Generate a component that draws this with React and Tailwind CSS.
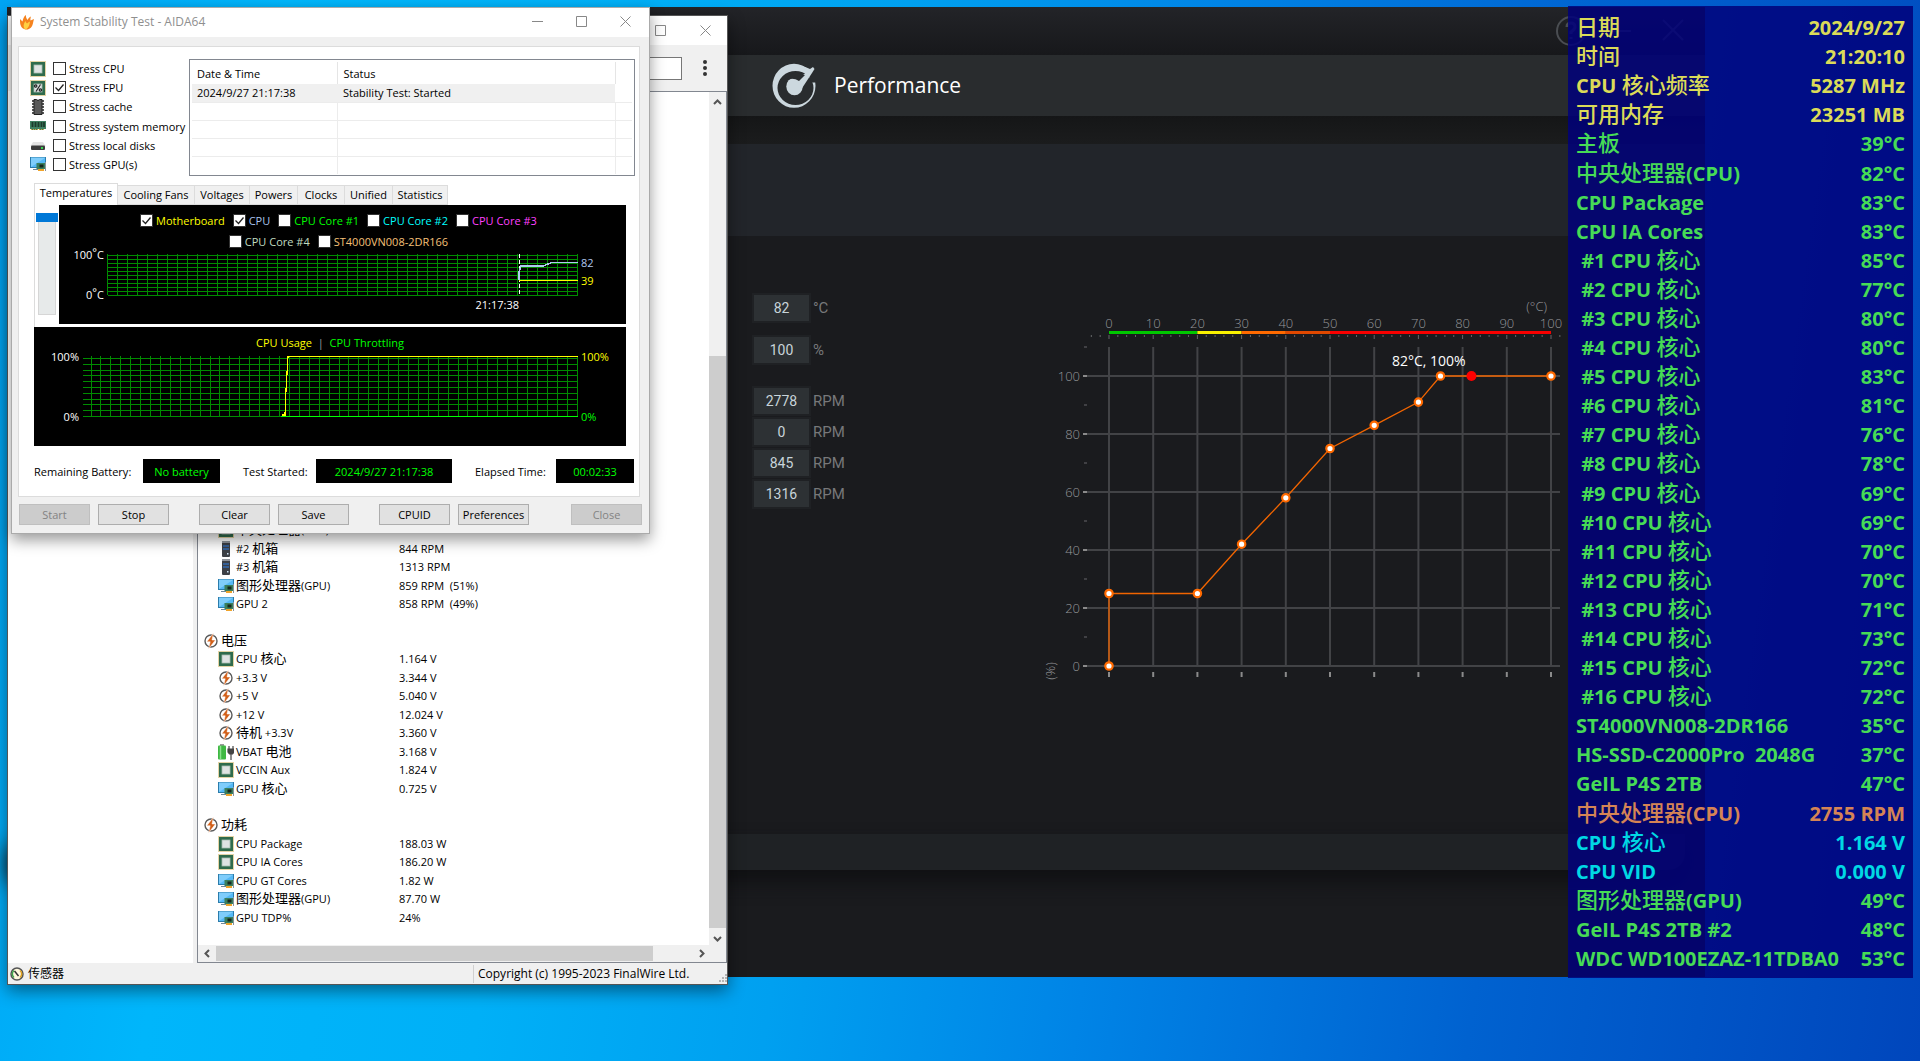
import React from "react";

const UI = "font-['Open_Sans','Noto_Sans_CJK_SC',sans-serif]";

/* ---------- icons ---------- */

function CpuIcon({ percent }) {
  return (
    <svg width="16" height="16" viewBox="0 0 16 16" className="shrink-0">
      <rect x="0.5" y="0.5" width="15" height="15" fill="none" stroke="#c9a64a" strokeDasharray="1 1" />
      <rect x="1" y="1" width="14" height="14" fill="#2f6b4c" />
      <rect x="4" y="4" width="8" height="8" fill="#dfe3e3" stroke="#a9bdb2" strokeWidth="0.8" />
      {percent && (
        <g stroke="#222" strokeWidth="1.2" fill="none">
          <path d="M10.5 4.5 6 11.5" />
          <circle cx="5.7" cy="6" r="1.2" />
          <circle cx="10.4" cy="10" r="1.2" />
        </g>
      )}
    </svg>
  );
}

function ChipIcon() {
  return (
    <svg width="16" height="16" viewBox="0 0 16 16" className="shrink-0">
      <path d="M2 2h12M2 5h12M2 8h12M2 11h12M2 14h12" stroke="#222" strokeWidth="1.6" />
      <path d="M4 .5h2.5q1.5 2 3 0H12v15H4z" fill="#5a5a5a" stroke="#222" />
    </svg>
  );
}

function RamIcon() {
  return (
    <svg width="16" height="16" viewBox="0 0 16 16" className="shrink-0">
      <path d="M0 3h16v8h-2v1H9v-1H7v1H2v-1H0z" fill="#3f8060" />
      <path d="M2.5 4v5M5.5 4v5M8.5 4v5M11.5 4v5M14 4v5" stroke="#1c3b2c" strokeWidth="1.8" />
      <path d="M1 11.5h14" stroke="#d3a63d" strokeDasharray="1 1" />
    </svg>
  );
}

function DiskIcon() {
  return (
    <svg width="16" height="16" viewBox="0 0 16 16" className="shrink-0">
      <path d="M3 5h10l2.5 4H.5z" fill="#e4e4e4" />
      <rect x="1" y="8.5" width="14" height="4.5" rx="1" fill="#3c3c3c" />
      <rect x="11" y="10" width="2" height="2" fill="#39d353" />
    </svg>
  );
}

function GpuIcon() {
  return (
    <svg width="16" height="16" viewBox="0 0 16 16" className="shrink-0">
      <rect x="0.5" y="1.5" width="15" height="10" fill="#55b8f5" stroke="#2b7cab" />
      <path d="M1 11 15 2v-.5H1z" fill="#7fcdfb" />
      <path d="M3 13.5h5" stroke="#6f8797" />
      <rect x="6.5" y="7" width="9" height="6" fill="#3a7f5e" />
      <rect x="9.5" y="8.5" width="4" height="3" fill="#16291f" />
      <rect x="8" y="13" width="6" height="2" fill="#f0a32a" />
      <path d="M15.5 6v9" stroke="#8a949a" />
    </svg>
  );
}

function BoltIcon() {
  return (
    <svg width="16" height="16" viewBox="0 0 16 16" className="shrink-0">
      <circle cx="8" cy="8" r="6" fill="#fff" stroke="#5a5a5a" strokeWidth="1.4" />
      <path d="M10.500 0 3.800 8.800h3.400L5.500 16l6.900-9H9z" fill="#d2601a" stroke="#fff" strokeWidth=".5" />
    </svg>
  );
}

function TowerIcon() {
  return (
    <svg width="16" height="16" viewBox="0 0 16 16" className="shrink-0">
      <rect x="4" y="0" width="8" height="16" rx="1" fill="#3d4046" />
      <rect x="4" y="0" width="8" height="2" fill="#8f949b" />
      <path d="M5 5h6M5 8h6" stroke="#2f7fe6" strokeWidth="1.2" />
      <rect x="9" y="12" width="1.5" height="1.5" fill="#cfe3f5" />
    </svg>
  );
}

function BatteryIcon() {
  return (
    <svg width="16" height="16" viewBox="0 0 16 16" className="shrink-0">
      <rect x="2" y="0" width="4" height="2" fill="#9a9a9a" />
      <rect x="0" y="1.5" width="8" height="14" rx="1" fill="#3fb843" />
      <path d="M2.5 2v13" stroke="#8be28d" strokeWidth="1.5" />
      <path d="M11 2v3M15 2v3M10 5h6v3l-1.5 2h-3L10 8zM13 10v6" fill="#444" stroke="#444" strokeWidth="1.2" />
    </svg>
  );
}

function FlameIcon() {
  return (
    <svg width="14" height="16" viewBox="0 0 14 16" className="shrink-0">
      <path d="M4 15C0 13 0 9 0 5l2.500 2.500C3 5 4 2 6 1c-.3 2 .5 3.500 1.500 5C8.500 4 9.500 3 11 2.500 10.500 4 10.300 5 10.500 6.500L14 5c-.5 2-.8 3-1.200 5-.5 3-3 5-5 5.500-1.300 0-2.600 0-3.800-.5z" fill="#f5831f" />
      <path d="M4.500 15C3 12.500 3.500 9.500 5.500 7c.5 1.500 1 2 1.500 2.500 1-1 2-1.500 3-2-.5 3-1 6-4 8z" fill="#ffd042" />
    </svg>
  );
}

function GaugeIcon() {
  return (
    <svg width="14" height="14" viewBox="0 0 14 14" className="shrink-0">
      <circle cx="7" cy="7" r="6" fill="#fff9df" stroke="#555" strokeWidth="1.5" />
      <path d="M4 3.5a4.5 4.5 0 0 0 0 7" stroke="#3da648" strokeWidth="1.5" fill="none" />
      <path d="M10 3.5a4.5 4.5 0 0 1 0 7" stroke="#e0a020" strokeWidth="1.5" fill="none" />
      <path d="m4.5 4 4 5" stroke="#333" strokeWidth="1.5" />
    </svg>
  );
}

function MinIcon() {
  return (
    <svg width="11" height="11" viewBox="0 0 11 11" stroke="#888" fill="none"><path d="M0 5.5h11" /></svg>
  );
}
function MaxIcon() {
  return (
    <svg width="11" height="11" viewBox="0 0 11 11" stroke="#888" fill="none"><path d="M.5.5h10v10H.5z" /></svg>
  );
}
function CloseIcon() {
  return (
    <svg width="11" height="11" viewBox="0 0 11 11" stroke="#888" fill="none"><path d="m.5.5 10 10M10.5.5l-10 10" /></svg>
  );
}

function Chevron({ d }) {
  return (
    <svg width="9" height="9" viewBox="0 0 9 9" fill="none" stroke="#555" strokeWidth="2"><path d={d} /></svg>
  );
}

function SpeedIcon() {
  return (
    <svg width="44" height="46" viewBox="0 0 44 46" className="shrink-0" fill="#ccd8de">
      <path
        fillRule="evenodd"
        d="M22 .8a21.500 22 0 1 0 0 44a21.500 22 0 1 0 0-44zM23.500 8a18 17 0 1 1 0 34a18 17 0 1 1 0-34z"
      />
      <path d="M33 0h11v19.500h-5z" fill="#292c2e" />
      <ellipse cx="22.500" cy="23.500" rx="8.200" ry="8.700" />
      <path d="M41 4l1.500 2L40 10 29.500 26l-8-8L33 10.500 30 3l4.500 1.500L38 6z" />
      <path d="M24 9.500 33 12 27 18q-6-4-12-1 2-6 9-7.500z" fill="#292c2e" />
    </svg>
  );
}

/* ---------- fan control window ---------- */

const fx = (t) => 1109 + t * 4.42;
const fy = (p) => 666 - p * 2.9;
const curve = [[0, 0], [0, 25], [20, 25], [30, 42], [40, 58], [50, 75], [60, 83], [70, 91], [75, 100], [100, 100]];
const tens = [0, 10, 20, 30, 40, 50, 60, 70, 80, 90, 100];
const bands = [
  [0, 20, "#00c800"], [20, 30, "#f8f000"], [30, 40, "#ff6a00"], [40, 50, "#e04800"], [50, 100, "#f80000"],
];

function FanCurve() {
  const minor = [];
  for (let t = -4; t <= 102; t += 2) minor.push(t);
  return (
    <svg width="528" height="392" viewBox="1040 295 528 392" className="shrink-0 font-['Open_Sans',sans-serif] text-[13px] font-light">
      <g stroke="#424346" strokeWidth="2">
        {tens.map((t) => <path key={t} d={`M${fx(t)} 347V666`} />)}
        {[0, 20, 40, 60, 80, 100].map((p) => <path key={p} d={`M1087 ${fy(p)}H1560`} />)}
      </g>
      <g stroke="#8b8b8b" strokeWidth="2">
        {tens.map((t) => <path key={t} d={`M${fx(t)} 672v5`} />)}
        {[0, 20, 40, 60, 80, 100].map((p) => <path key={p} d={`M1083 ${fy(p)}h4`} />)}
      </g>
      <g stroke="#66676a" strokeWidth="1">
        {[10, 30, 50, 70, 90, 110].map((p) => <path key={p} d={`M1084 ${fy(p)}h3`} />)}
        {minor.map((t) => <path key={t} d={`M${fx(t)} 335v${t % 10 === 0 ? 4 : 2}`} />)}
      </g>
      {bands.map(([a, b, c]) => <rect key={a} x={fx(a)} y="331" width={fx(b) - fx(a)} height="3" fill={c} />)}
      <g fill="#96979a">
        {tens.map((t) => <text key={t} x={fx(t)} y="328" textAnchor="middle">{t}</text>)}
        {[0, 20, 40, 60, 80, 100].map((p) => <text key={p} x="1080" y={fy(p) + 5} textAnchor="end">{p}</text>)}
        <text x="1547" y="311" textAnchor="end">(°C)</text>
        <text x="1050" y="671" textAnchor="middle" transform="rotate(-90 1050 671)" dy="5">(%)</text>
      </g>
      <polyline points={curve.map(([t, p]) => `${fx(t)},${fy(p)}`).join(" ")} fill="none" stroke="#f26500" strokeWidth="1.3" />
      {curve.map(([t, p]) => (
        <circle key={`${t}-${p}`} cx={fx(t)} cy={fy(p)} r="3.7" fill="#fff" stroke="#ff6a00" strokeWidth="2.2" />
      ))}
      <circle cx={fx(82)} cy={fy(100)} r="5" fill="#f00" />
      <text x="1392" y="366" fill="#fff" className="text-[14px] font-normal">82°C, 100%</text>
    </svg>
  );
}

function Reading({ value, unit }) {
  return (
    <div className="flex items-center gap-1">
      <output className="flex h-[26px] w-[55px] items-center justify-center bg-[#2d3134] text-[14px] text-[#c8d4da] shadow-[0_0_0_2px_#1f2124]">{value}</output>
      <span className="text-[15px] text-[#77787a]">{unit}</span>
    </div>
  );
}

function FanWindow() {
  return (
    <section className="absolute top-[7px] right-[215px] bottom-[84px] left-[7px] flex flex-col bg-[#1a1b1e] font-[Roboto,sans-serif]">
      <div className="flex h-12 items-center justify-end bg-gradient-to-b from-[#232428] to-[#17181b] pr-5">
        <svg width="130" height="32" viewBox="0 0 130 32" fill="none" stroke="#4a4d52" strokeWidth="2">
          <circle cx="16" cy="16" r="14" />
          <path d="M12 12q0-4 4-4t4 4q0 2-4 5v2M16 22v2" strokeWidth="3" />
          <path d="M56 16h20M108 5l20 20M128 5l-20 20" />
        </svg>
      </div>
      <header className="flex h-[61px] items-center gap-[18px] bg-[#292c2e] pl-[765px]">
        <SpeedIcon />
        <h1 className="font-['Open_Sans',sans-serif] text-[21px] text-white">Performance</h1>
      </header>
      <div className="h-7 bg-gradient-to-b from-[#151617] to-[#1b1c1d]" />
      <div className="h-[92px] bg-[#22252a]" />
      <div className="flex flex-1 pt-[59px] pl-[747px]">
        <div className="flex w-[286px] flex-col">
          <Reading value="82" unit="°C" />
          <div className="mt-4"><Reading value="100" unit="%" /></div>
          <div className="mt-[25px] flex flex-col gap-[5px]">
            {["2778", "0", "845", "1316"].map((v) => <Reading key={v} value={v} unit="RPM" />)}
          </div>
        </div>
        <FanCurve />
      </div>
      <div className="mr-5 h-9 rounded-br-2xl bg-[#1f2225] shadow-[0_12px_20px_#101113]" />
      <div className="h-[107px]" />
    </section>
  );
}

/* ---------- sensor list window ---------- */

const sensors = [
  ["cpu", "中央处理器(CPU)", "2755 RPM"],
  ["tower", "#2 机箱", "844 RPM"],
  ["tower", "#3 机箱", "1313 RPM"],
  ["gpu", "图形处理器(GPU)", "859 RPM\u00a0 (51%)"],
  ["gpu", "GPU 2", "858 RPM\u00a0 (49%)"],
  null,
  ["head", "电压"],
  ["cpu", "CPU 核心", "1.164 V"],
  ["bolt", "+3.3 V", "3.344 V"],
  ["bolt", "+5 V", "5.040 V"],
  ["bolt", "+12 V", "12.024 V"],
  ["bolt", "待机 +3.3V", "3.360 V"],
  ["battery", "VBAT 电池", "3.168 V"],
  ["cpu", "VCCIN Aux", "1.824 V"],
  ["gpu", "GPU 核心", "0.725 V"],
  null,
  ["head", "功耗"],
  ["cpu", "CPU Package", "188.03 W"],
  ["cpu", "CPU IA Cores", "186.20 W"],
  ["gpu", "CPU GT Cores", "1.82 W"],
  ["gpu", "图形处理器(GPU)", "87.70 W"],
  ["gpu", "GPU TDP%", "24%"],
];
const sensorIcons = { cpu: CpuIcon, tower: TowerIcon, gpu: GpuIcon, bolt: BoltIcon, battery: BatteryIcon, head: BoltIcon };

function isCjk(s) {
  return /[\u4e00-\u9fff]/.test(s);
}

/* Han characters sit one size above the Latin text beside them. */
function Mixed({ text, han }) {
  return text.split(/([\u4e00-\u9fff]+)/).map((s, i) => (isCjk(s) ? <span key={i} className={han}>{s}</span> : s));
}

function SensorRow({ row }) {
  if (!row) return <div className="min-h-0 flex-1" />;
  const [kind, name, value] = row;
  const Icon = sensorIcons[kind];
  return (
    <div className={`flex min-h-0 flex-1 items-center gap-[2px] leading-[18px] ${kind === "head" ? "pl-[5px]" : "pl-5"}`}>
      <Icon />
      <span className="w-[161px] whitespace-pre"><Mixed text={name} han="text-[13px] leading-none" /></span>
      <span>{value}</span>
    </div>
  );
}

function SensorWindow() {
  return (
    <section className={`absolute top-[15px] left-[7px] flex h-[970px] w-[721px] flex-col border border-[#555] bg-[#f0f0f0] text-[11px] text-black shadow-[0_6px_16px_rgba(0,0,0,0.45)] ${UI}`}>
      <div className="flex h-[29px] items-center justify-end gap-[34px] bg-white pr-4">
        <button aria-label="Maximize"><MaxIcon /></button>
        <button aria-label="Close"><CloseIcon /></button>
      </div>
      <div className="flex h-[46px] items-center justify-end gap-[21px] pr-5">
        <input aria-label="Search" className="h-[23px] w-[160px] border border-[#777] bg-white" />
        <button aria-label="Menu" className="flex flex-col gap-[2px]">
          {[0, 1, 2].map((i) => <span key={i} className="size-1 rounded-full bg-[#333]" />)}
        </button>
      </div>
      <div className="flex min-h-0 flex-1 gap-1">
        <div className="w-[185px] bg-white" />
        <div className="flex flex-1 flex-col border border-[#828790] bg-white">
          <div className="flex min-h-0 flex-1">
            <div className="flex flex-1 flex-col justify-end pb-[18px]">
              <div className="flex h-[406px] flex-col">
                {sensors.map((r, i) => <SensorRow key={i} row={r} />)}
              </div>
            </div>
            <div className="flex w-[17px] flex-col items-center bg-[#f0f0f0]">
              <button aria-label="Scroll up" className="h-[17px] pt-1"><Chevron d="m1 6 3.5-3.5L8 6" /></button>
              <div className="mt-[247px] w-full flex-1 bg-[#cdcdcd]" />
              <button aria-label="Scroll down" className="h-[17px] pt-1"><Chevron d="m1 3 3.5 3.5L8 3" /></button>
            </div>
          </div>
          <div className="flex h-[17px] items-center justify-between bg-[#f0f0f0] pr-5 pl-[5px]">
            <button aria-label="Scroll left"><Chevron d="M6 1 2.5 4.5 6 8" /></button>
            <div className="mr-auto ml-1 h-[15px] w-[437px] bg-[#cdcdcd]" />
            <button aria-label="Scroll right"><Chevron d="m3 1 3.5 3.500L3 8" /></button>
          </div>
        </div>
      </div>
      <footer className="flex h-[21px] items-center">
        <div className="flex w-[465px] items-center gap-1 pl-[2px]">
          <GaugeIcon />
          <span className="text-[12px]">传感器</span>
        </div>
        <div className="flex flex-1 items-center justify-between border-l border-[#d0d0d0] pl-1 text-[12px]">
          Copyright (c) 1995-2023 FinalWire Ltd.
          <svg width="8" height="8" viewBox="0 0 8 8" fill="#b5b5b5" className="mt-2">
            <path d="M6 0h2v2H6zM6 3h2v2H6zM6 6h2v2H6zM3 3h2v2H3zM3 6h2v2H3zM0 6h2v2H0z" />
          </svg>
        </div>
      </footer>
    </section>
  );
}

/* ---------- stability test window ---------- */

function Tick({ label, checked, className = "" }) {
  return (
    <label className={`flex items-center gap-[3px] whitespace-nowrap ${className}`}>
      <span className="relative flex size-[13px] shrink-0">
        <input type="checkbox" defaultChecked={checked} className="peer size-[13px] appearance-none border border-[#333] bg-white" />
        <svg viewBox="0 0 13 13" className="pointer-events-none absolute inset-0 hidden peer-checked:block" fill="none" stroke="#222" strokeWidth="1.3">
          <path d="m2.5 6.5 3 3 5-6" />
        </svg>
      </span>
      {label}
    </label>
  );
}

const stress = [
  [<CpuIcon key="i" />, "Stress CPU"],
  [<CpuIcon key="i" percent />, "Stress FPU", true],
  [<ChipIcon key="i" />, "Stress cache"],
  [<RamIcon key="i" />, "Stress system memory"],
  [<DiskIcon key="i" />, "Stress local disks"],
  [<GpuIcon key="i" />, "Stress GPU(s)"],
];

function EventTable() {
  return (
    <div className="h-[117px] w-[446px] border border-[#828790] bg-white px-[2px] pt-[2px]">
      <table className="w-full table-fixed border-collapse text-left">
        <colgroup>
          <col className="w-[145px]" />
          <col className="w-[278px]" />
          <col />
        </colgroup>
        <thead>
          <tr className="h-[22px]">
            <th className="border-r border-[#e5e5e5] pl-[5px] font-normal">Date &amp; Time</th>
            <th className="border-r border-[#e5e5e5] pl-[6px] font-normal">Status</th>
            <th />
          </tr>
        </thead>
        <tbody>
          <tr className="h-[18px]">
            <td className="bg-[#f0f0f0] pl-[5px]">2024/9/27 21:17:38</td>
            <td className="bg-[#f0f0f0] pl-[6px]">Stability Test: Started</td>
            <td />
          </tr>
          {[0, 1, 2, 3].map((i) => (
            <tr key={i} className="h-[18px] border-t border-[#ececec]">
              <td className="border-r border-[#ececec]" />
              <td className="border-r border-[#ececec]" />
              <td />
            </tr>
          ))}
        </tbody>
      </table>
    </div>
  );
}

function range(a, b, step) {
  const out = [];
  for (let v = a; v <= b; v += step) out.push(v);
  return out;
}

function TempPlot() {
  return (
    <svg width="567" height="81" viewBox="59 243 567 81" className="-mt-[6px] shrink-0 text-[11px]" shapeRendering="crispEdges">
      <g stroke="#008c00">
        {range(255, 295, 4).map((y) => <path key={y} d={`M108 ${y + 0.5}H578`} />)}
        {range(107, 577, 10).map((x) => <path key={x} d={`M${x + 0.5} 254V295`} />)}
      </g>
      <path d="M519.5 254v41" stroke="#fff" strokeDasharray="4 2" />
      <path d="M519 280V272L521 266H543L552 262.500H578" fill="none" stroke="#b0c8f0" strokeWidth="1.5" />
      <path d="M519 280.5h59" stroke="#ff0" strokeWidth="1.5" />
      <g fill="#fff">
        <text x="104" y="259" textAnchor="end">100<tspan dy="-3">°</tspan><tspan dy="3">C</tspan></text>
        <text x="104" y="299" textAnchor="end">0<tspan dy="-3">°</tspan><tspan dy="3">C</tspan></text>
        <text x="519" y="309" textAnchor="end">21:17:38</text>
      </g>
      <text x="581" y="267" fill="#b0c8f0">82</text>
      <text x="581" y="285" fill="#ff0">39</text>
    </svg>
  );
}

function UsagePlot() {
  return (
    <svg width="592" height="96" viewBox="34 350 592 96" className="text-[11px]" shapeRendering="crispEdges">
      <g stroke="#008c00">
        {range(0, 10, 1).map((i) => <path key={i} d={`M83 ${Math.round(358 + i * 5.8) + 0.5}H578`} />)}
        {range(0, 49, 1).map((i) => <path key={i} d={`M${Math.round(90.5 + i * 9.92) + 0.5} 356V416`} />)}
      </g>
      <path d="M281 416.5H578" stroke="#0f0" strokeWidth="1.5" />
      <path d="M282 415h3L286 390 288 356.500H578" fill="none" stroke="#ff0" strokeWidth="1.2" />
      <g fill="#fff" textAnchor="end">
        <text x="79" y="361">100%</text>
        <text x="79" y="421">0%</text>
      </g>
      <text x="581" y="361" fill="#ff0">100%</text>
      <text x="581" y="421" fill="#0f0">0%</text>
    </svg>
  );
}

const tabs = [
  ["Temperatures", "w-[84px]"], ["Cooling Fans", "w-[77px]"], ["Voltages", "w-[55px]"], ["Powers", "w-[48px]"],
  ["Clocks", "w-[47px]"], ["Unified", "w-[48px]"], ["Statistics", "w-[55px]"],
];

function Push({ children, disabled, className = "" }) {
  return (
    <button
      disabled={disabled}
      className={`h-[21px] w-[71px] border ${disabled ? "border-[#bfbfbf] bg-[#cccccc] text-[#838383]" : "border-[#adadad] bg-[#e1e1e1] text-black"} ${className}`}
    >
      {children}
    </button>
  );
}

function StabilityWindow() {
  return (
    <section className={`absolute top-[7px] left-[11px] flex h-[527px] w-[639px] flex-col border border-[#aaa] bg-[#f0f0f0] text-[11px] leading-[15px] text-black shadow-[0_6px_14px_rgba(0,0,0,0.4)] ${UI}`}>
      <header className="flex h-[29px] shrink-0 items-center bg-white pr-[18px] pb-[2px] pl-2 text-[#8f8f8f]">
        <FlameIcon />
        <h2 className="ml-[6px] text-[12px]">System Stability Test - AIDA64</h2>
        <div className="ml-auto flex gap-[33px]">
          <button aria-label="Minimize"><MinIcon /></button>
          <button aria-label="Maximize"><MaxIcon /></button>
          <button aria-label="Close"><CloseIcon /></button>
        </div>
      </header>
      <div className="mx-[6px] mt-[9px] h-[451px] w-[622px] border border-[#dcdcdc] bg-white">
        <div className="flex pt-3 pl-[11px]">
          <div className="flex h-[115px] w-[159px] flex-col">
            {stress.map(([icon, label, on]) => (
              <div key={label} className="flex flex-1 items-center gap-[7px]">
                {icon}
                <Tick label={label} checked={on} />
              </div>
            ))}
          </div>
          <EventTable />
        </div>
        <div role="tablist" className="mt-[7px] ml-[15px] flex h-[22px] items-end">
          {tabs.map(([t, w], i) => (
            <button
              key={t}
              role="tab"
              aria-selected={i === 0}
              className={`${w} border-t border-r border-[#dcdcdc] whitespace-nowrap ${i === 0 ? "h-[22px] border-l bg-white pb-1" : "h-5 border-b bg-[#f0f0f0] pb-[2px]"}`}
            >
              {t}
            </button>
          ))}
        </div>
        <div className="ml-[15px] flex w-[592px] border-l border-[#dcdcdc]">
          <div className="relative flex h-[122px] w-6 justify-center pt-2">
            <div className="h-[102px] w-[18px] border border-[#d6d6d6] bg-[#e7eaea]" />
            <div className="absolute top-2 left-px h-[9px] w-[22px] bg-[#0078d7]" />
          </div>
          <div className="flex h-[119px] flex-1 flex-col bg-black pt-2">
            <div className="flex justify-center gap-2 pr-2">
              <Tick label="Motherboard" checked className="text-[#ffff00]" />
              <Tick label="CPU" checked className="text-[#a9c4ee]" />
              <Tick label="CPU Core #1" className="text-[#00ff00]" />
              <Tick label="CPU Core #2" className="text-[#00ffff]" />
              <Tick label="CPU Core #3" className="text-[#ff40ff]" />
            </div>
            <div className="mt-[6px] flex justify-center gap-2 pr-2">
              <Tick label="CPU Core #4" className="text-[#c0dcc0]" />
              <Tick label="ST4000VN008-2DR166" className="text-[#f5c078]" />
            </div>
            <TempPlot />
          </div>
        </div>
        <div className="ml-[15px] h-[119px] w-[592px] bg-black pt-2 text-center">
          <p>
            <span className="text-[#ffff00]">CPU Usage</span>
            <span className="text-[#a0a0a0]">&nbsp; |&nbsp; </span>
            <span className="text-[#00ff00]">CPU Throttling</span>
          </p>
          <UsagePlot />
        </div>
        <dl className="mt-[13px] ml-[15px] flex h-6 w-[600px] items-center">
          <dt className="w-[109px]">Remaining Battery:</dt>
          <dd className="flex h-6 w-[77px] items-center justify-center bg-black text-[#00ff00]">No battery</dd>
          <dt className="ml-[23px] w-[73px]">Test Started:</dt>
          <dd className="flex h-6 w-[136px] items-center justify-center bg-black text-[#00ff00]">2024/9/27 21:17:38</dd>
          <dt className="ml-[23px] w-[81px]">Elapsed Time:</dt>
          <dd className="flex h-6 w-[78px] items-center justify-center bg-black text-[#00ff00]">00:02:33</dd>
        </dl>
      </div>
      <div className="mt-[7px] flex gap-2 px-[7px]">
        <Push disabled>Start</Push>
        <Push>Stop</Push>
        <Push className="ml-[22px]">Clear</Push>
        <Push>Save</Push>
        <Push className="ml-[22px]">CPUID</Push>
        <Push>Preferences</Push>
        <Push disabled className="ml-auto">Close</Push>
      </div>
    </section>
  );
}

/* ---------- sensor overlay ---------- */

const Y = "text-[#dbdb58]";
const G = "text-[#46db56]";
const coreTemps = [85, 77, 80, 80, 83, 81, 76, 78, 69, 69, 70, 70, 71, 73, 72, 72];
const overlay = [
  ["日期", "2024/9/27", Y],
  ["时间", "21:20:10", Y],
  ["CPU 核心频率", "5287 MHz", Y],
  ["可用内存", "23251 MB", Y],
  ["主板", "39°C", G],
  ["中央处理器(CPU)", "82°C", G],
  ["CPU Package", "83°C", G],
  ["CPU IA Cores", "83°C", G],
  ...coreTemps.map((t, i) => [` #${i + 1} CPU 核心`, `${t}°C`, G]),
  ["ST4000VN008-2DR166", "35°C", G],
  ["HS-SSD-C2000Pro  2048G", "37°C", G],
  ["GeIL P4S 2TB", "47°C", G],
  ["中央处理器(CPU)", "2755 RPM", "text-[#d58455]"],
  ["CPU 核心", "1.164 V", "text-[#00d8e4]"],
  ["CPU VID", "0.000 V", "text-[#00d8e4]"],
  ["图形处理器(GPU)", "49°C", G],
  ["GeIL P4S 2TB #2", "48°C", G],
  ["WDC WD100EZAZ-11TDBA0", "53°C", G],
];

function Overlay() {
  return (
    <aside className="absolute top-[6px] right-[7px] bottom-[83px] flex w-[345px] flex-col bg-[#00007a]/85 px-2 pt-[7px] pb-[5px] font-['Open_Sans','Noto_Sans_CJK_SC',sans-serif] text-[20px] leading-[29px] font-bold">
      {overlay.map(([name, value, color], i) => (
        <div key={i} className={`flex min-h-0 flex-1 items-center justify-between whitespace-pre ${color}`}>
          <span><Mixed text={name} han="text-[22px] leading-none font-medium" /></span>
          <span>{value}</span>
        </div>
      ))}
    </aside>
  );
}

export default function App() {
  return (
    <main className="relative h-screen w-full overflow-hidden bg-[linear-gradient(98deg,#00a4f4_0%,#00b6fb_14%,#00b0f7_30%,#00a0f0_44%,#0084e6_59%,#0062d0_78%,#0046bc_100%)]">
      <FanWindow />
      <SensorWindow />
      <StabilityWindow />
      <Overlay />
    </main>
  );
}
